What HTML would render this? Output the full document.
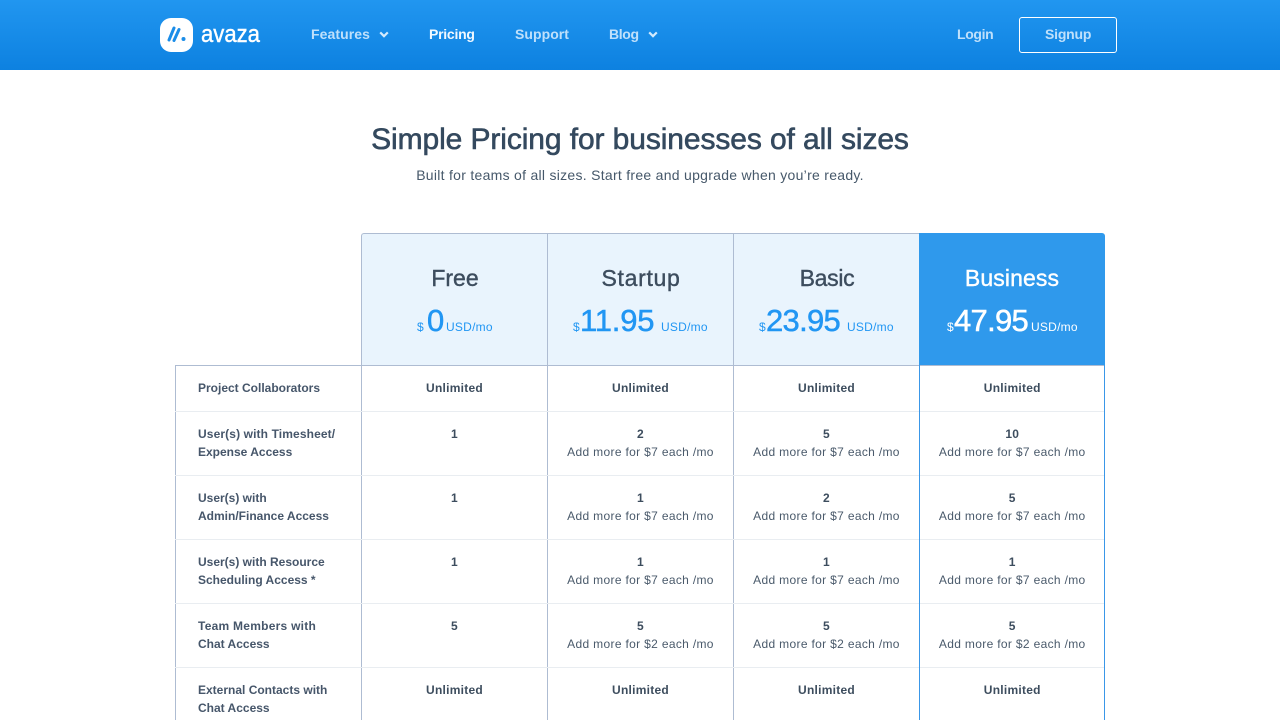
<!DOCTYPE html>
<html><head><meta charset="utf-8"><title>Avaza Pricing</title>
<style>
*{box-sizing:border-box}
html,body{margin:0;padding:0;width:1280px;height:720px;overflow:hidden;background:#fff}
body{position:relative;font-family:"Liberation Sans",sans-serif;color:#3d4d5e}
.a{position:absolute;white-space:nowrap}
#nav{position:absolute;left:0;top:0;width:1280px;height:70px;background:linear-gradient(#2196f0,#0d81e0)}
.n{position:absolute;top:24px;font-size:14px;line-height:20px;font-weight:bold;color:#bfe0fb;white-space:nowrap}
h1{position:absolute;left:0;width:1280px;top:121px;margin:0;text-align:center;font-size:30px;line-height:38px;font-weight:normal;color:#34495e;letter-spacing:-.1px;-webkit-text-stroke:.6px currentColor}
.sub{position:absolute;left:0;width:1280px;top:165px;text-align:center;font-size:14px;line-height:20px;color:#46586a;letter-spacing:.28px}
.head{position:absolute;top:233px;height:133px;width:187px;background:#e9f4fd;border:1px solid #aebcd2;border-right:0;text-align:center}
.head b{position:absolute;left:0;right:0;top:30px;font-size:23px;line-height:28px;font-weight:normal;color:#3d4d5e;-webkit-text-stroke:.4px currentColor}
.p{position:absolute;left:0;right:0;top:69px;height:36px;color:#2196f3;white-space:nowrap}
.p i{position:absolute;font-style:normal}
.s{font-size:12px;line-height:16px;top:16px}
.v{font-size:31px;line-height:36px;top:0;letter-spacing:-.7px;-webkit-text-stroke:.5px currentColor}
.u{font-size:12px;line-height:16px;top:16px;letter-spacing:.25px}
table{position:absolute;left:175px;top:365px;width:929px;border-collapse:collapse;table-layout:fixed}
td{padding:13px 0 0;vertical-align:top;font-size:12px;line-height:18px;text-align:center;border-bottom:1px solid #e9edf1;border-left:1px solid #aebcd2;border-right:1px solid #aebcd2;letter-spacing:.33px;color:#4a5a6b}
tr:first-child td{border-top:1px solid #aebcd2}
td:first-child{text-align:left;padding-left:22px;font-weight:bold;color:#46566a;letter-spacing:0}
td b{color:#3d4d5e;letter-spacing:.25px}
td:last-child{border-right:0}
.r1{height:46px}.r2{height:64px}
#biz{position:absolute;left:919px;top:365px;width:186px;height:355px;border-left:1px solid #3a97e8;border-right:1px solid #3a97e8}
</style></head><body>
<div id="nav">
<svg class="a" style="left:160px;top:18px" width="33" height="34" viewBox="0 0 33 34"><rect width="33" height="34" rx="11" fill="#fff"/><g stroke="#1b8de8" stroke-width="3" stroke-linecap="round" fill="none"><path d="M9 22L14 10"/><path d="M14 22.5L19 11.5"/></g><circle cx="23.5" cy="21" r="2" fill="#1b8de8"/></svg>
<div class="a" style="left:201px;top:19px;font-size:24px;line-height:32px;color:#fff;transform-origin:0 50%;transform:scaleX(.92);-webkit-text-stroke:.4px #fff">avaza</div>
<div class="n" style="left:311px;letter-spacing:.08px">Features</div>
<svg class="a" style="left:379px;top:31px" width="10" height="8" viewBox="0 0 10 8"><path d="M1.2 1.4L5 5.2L8.8 1.4" fill="none" stroke="#d3eafd" stroke-width="2.2"/></svg>
<div class="n" style="left:429px;color:#f0f8ff;letter-spacing:-.25px">Pricing</div>
<div class="n" style="left:515px;letter-spacing:.05px">Support</div>
<div class="n" style="left:609px;letter-spacing:-.35px">Blog</div>
<svg class="a" style="left:648px;top:31px" width="10" height="8" viewBox="0 0 10 8"><path d="M1.2 1.4L5 5.2L8.8 1.4" fill="none" stroke="#d3eafd" stroke-width="2.2"/></svg>
<div class="n" style="left:957px;letter-spacing:-.35px">Login</div>
<div class="a" style="left:1019px;top:17px;width:98px;height:36px;border:1px solid #fff;border-radius:3px"></div>
<div class="n" style="left:1045px;letter-spacing:-.2px">Signup</div>
</div>
<h1>Simple Pricing for businesses of all sizes</h1>
<div class="sub">Built for teams of all sizes. Start free and upgrade when you’re ready.</div>

<div class="head" style="left:361px;border-top-left-radius:3px"><b>Free</b><div class="p"><i class="s" style="left:55px">$</i><i class="v" style="left:65px">0</i><i class="u" style="left:84px">USD/mo</i></div></div>
<div class="head" style="left:547px"><b style="letter-spacing:.7px">Startup</b><div class="p"><i class="s" style="left:25px">$</i><i class="v" style="left:32px;letter-spacing:-.2px">11.95</i><i class="u" style="left:113px">USD/mo</i></div></div>
<div class="head" style="left:733px"><b style="letter-spacing:-.3px">Basic</b><div class="p"><i class="s" style="left:25px">$</i><i class="v" style="left:32px">23.95</i><i class="u" style="left:113px">USD/mo</i></div></div>
<div class="head" style="left:919px;width:186px;background:#2f99ec;border:0;border-top-right-radius:3px;color:#fff"><b style="color:#fff;top:31px;letter-spacing:.1px">Business</b><div class="p" style="color:#fff;top:70px"><i class="s" style="left:28px">$</i><i class="v" style="left:35px">47.95</i><i class="u" style="left:112px">USD/mo</i></div></div>

<table>
<colgroup><col style="width:186px"><col style="width:186px"><col style="width:186px"><col style="width:186px"><col style="width:185px"></colgroup>
<tr class="r1"><td>Project Collaborators</td><td><b>Unlimited</b></td><td><b>Unlimited</b></td><td><b>Unlimited</b></td><td><b>Unlimited</b></td></tr>
<tr class="r2"><td><span style="letter-spacing:.12px">User(s) with Timesheet/</span><br>Expense Access</td><td><b>1</b></td><td><b>2</b><br>Add more for $7 each /mo</td><td><b>5</b><br>Add more for $7 each /mo</td><td><b>10</b><br>Add more for $7 each /mo</td></tr>
<tr class="r2"><td>User(s) with<br>Admin/Finance Access</td><td><b>1</b></td><td><b>1</b><br>Add more for $7 each /mo</td><td><b>2</b><br>Add more for $7 each /mo</td><td><b>5</b><br>Add more for $7 each /mo</td></tr>
<tr class="r2"><td>User(s) with Resource<br>Scheduling Access *</td><td><b>1</b></td><td><b>1</b><br>Add more for $7 each /mo</td><td><b>1</b><br>Add more for $7 each /mo</td><td><b>1</b><br>Add more for $7 each /mo</td></tr>
<tr class="r2"><td><span style="letter-spacing:.25px">Team Members with</span><br>Chat Access</td><td><b>5</b></td><td><b>5</b><br>Add more for $2 each /mo</td><td><b>5</b><br>Add more for $2 each /mo</td><td><b>5</b><br>Add more for $2 each /mo</td></tr>
<tr class="r2"><td>External Contacts with<br>Chat Access</td><td><b>Unlimited</b></td><td><b>Unlimited</b></td><td><b>Unlimited</b></td><td><b>Unlimited</b></td></tr>
</table>
<div id="biz"></div>
</body></html>
